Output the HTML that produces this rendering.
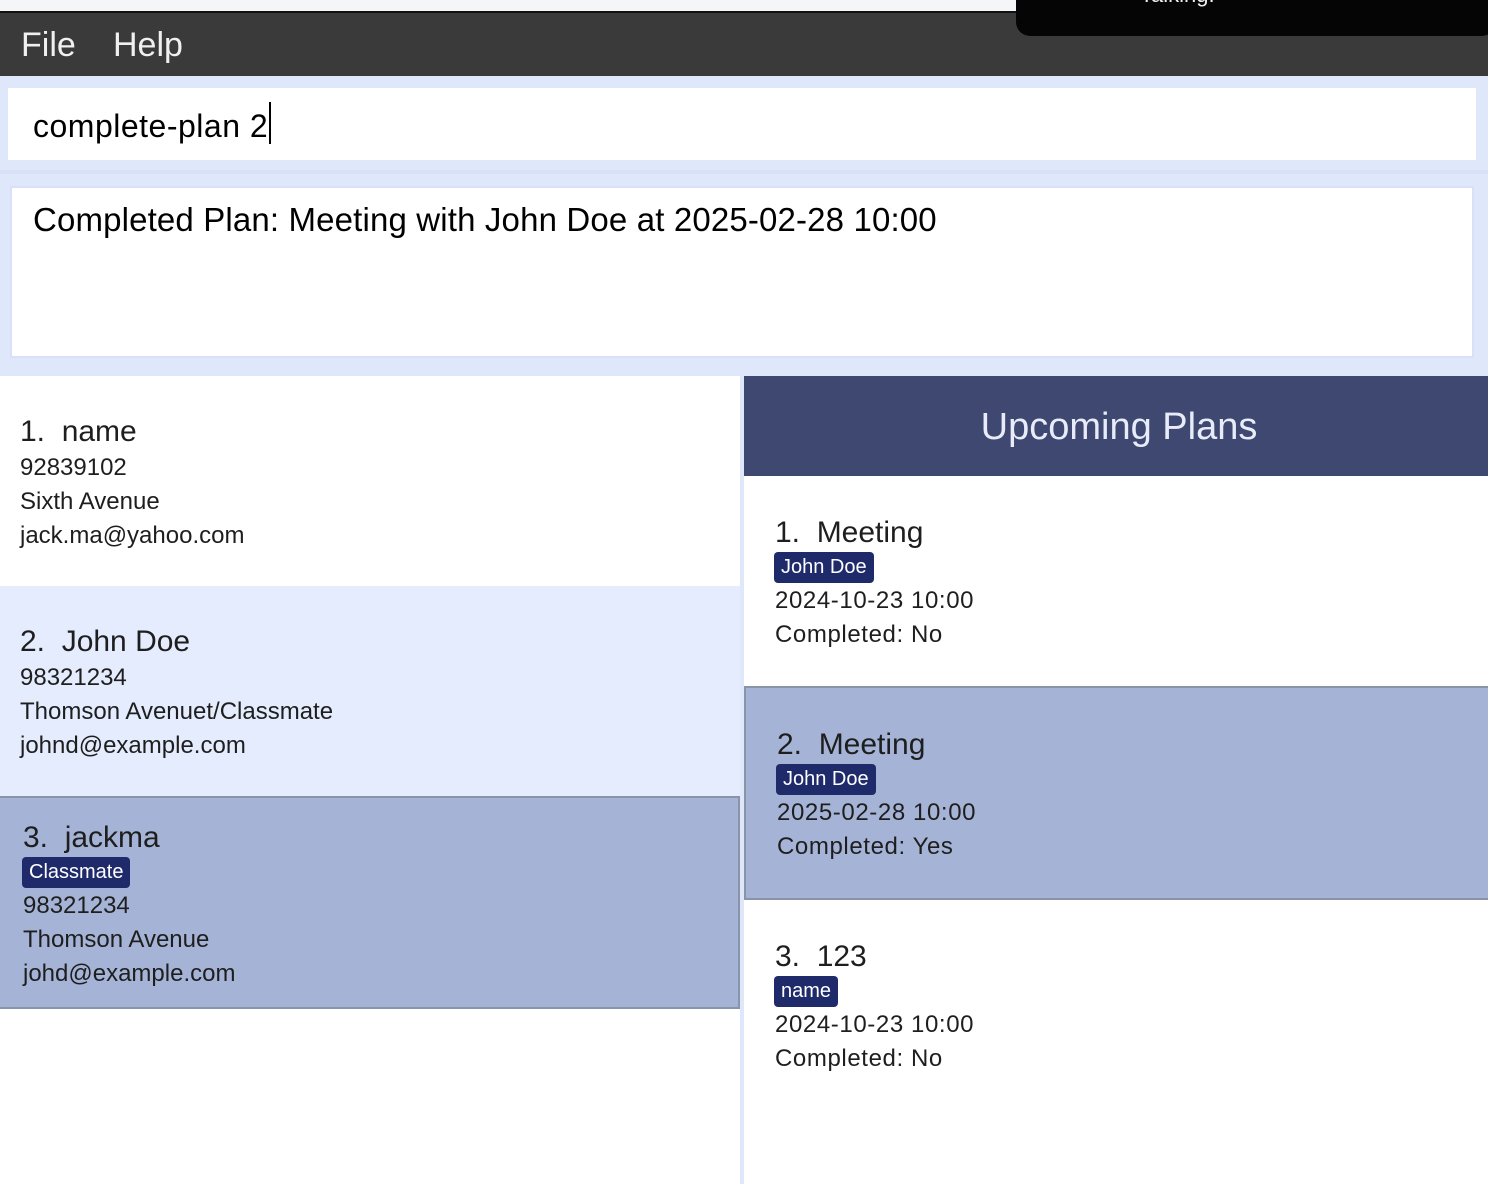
<!DOCTYPE html>
<html><head><meta charset="utf-8"><style>
*{margin:0;padding:0;box-sizing:border-box}
body{width:1488px;height:1184px;position:relative;overflow:hidden;background:#dfe8fa;font-family:"Liberation Sans",sans-serif;color:#1e1e1e}
.a{position:absolute;white-space:nowrap;line-height:1}
.box{position:absolute}
.n{font-size:30px}
.d{font-size:24px}
.r .d{letter-spacing:0.6px}
.tag{position:absolute;background:#1f2a6b;color:#fff;border-radius:4px;font-size:20px;line-height:31px;padding:0 7px;white-space:nowrap}
</style></head><body>
<div class="box" style="left:0;top:0;width:1488px;height:12px;background:#f5f6f8"></div>
<div class="box" style="left:0;top:11px;width:1488px;height:2px;background:#111"></div>
<div class="box" style="left:0;top:13px;width:1488px;height:63px;background:#3a3a3a"></div>
<div class="a" style="left:21px;top:28px;font-size:34px;color:#f0f0f0">File</div>
<div class="a" style="left:113px;top:28px;font-size:34px;color:#f0f0f0">Help</div>
<div class="box" style="left:1016px;top:-10px;width:480px;height:46px;background:#050505;border-radius:0 0 14px 14px"></div>
<div class="a" style="left:1140px;top:-16px;font-size:22px;color:#eee">Talking.</div>

<div class="box" style="left:8px;top:88px;width:1468px;height:72px;background:#fff"></div>
<div class="a" style="left:33px;top:110px;font-size:32px;color:#000;letter-spacing:0.5px">complete-plan 2</div>
<div class="box" style="left:269px;top:102px;width:2px;height:42px;background:#000"></div>
<div class="box" style="left:0;top:170px;width:1488px;height:4px;background:#d7e2f8"></div>
<div class="box" style="left:10px;top:186px;width:1464px;height:172px;background:#fff;border:2px solid #d7e2f8"></div>
<div class="a" style="left:33px;top:203px;font-size:33px;color:#000;letter-spacing:0.15px">Completed Plan: Meeting with John Doe at 2025-02-28 10:00</div>

<!-- left list -->
<div class="box" style="left:0;top:376px;width:740px;height:808px;background:#fff"></div>
<div class="box" style="left:0;top:586px;width:740px;height:210px;background:#e4ecfd"></div>
<div class="box" style="left:0;top:796px;width:740px;height:213px;background:#a5b4d6;border:2px solid #8a94a8;border-left:none"></div>
<div class="box" style="left:740px;top:376px;width:4px;height:808px;background:#dfe8fa"></div>

<div class="a n" style="left:20px;top:417px">1.&nbsp; name</div>
<div class="a d" style="left:20px;top:456px">92839102</div>
<div class="a d" style="left:20px;top:490px">Sixth Avenue</div>
<div class="a d" style="left:20px;top:524px">jack.ma@yahoo.com</div>

<div class="a n" style="left:20px;top:627px">2.&nbsp; John Doe</div>
<div class="a d" style="left:20px;top:666px">98321234</div>
<div class="a d" style="left:20px;top:700px">Thomson Avenuet/Classmate</div>
<div class="a d" style="left:20px;top:734px">johnd@example.com</div>

<div class="a n" style="left:23px;top:823px">3.&nbsp; jackma</div>
<div class="tag" style="left:22px;top:857px">Classmate</div>
<div class="a d" style="left:23px;top:894px">98321234</div>
<div class="a d" style="left:23px;top:928px">Thomson Avenue</div>
<div class="a d" style="left:23px;top:962px">johd@example.com</div>

<!-- right panel -->
<div class="r">
<div class="box" style="left:744px;top:376px;width:744px;height:808px;background:#fff"></div>
<div class="box" style="left:744px;top:376px;width:744px;height:100px;background:#3e4870"></div>
<div class="a" style="left:744px;width:750px;text-align:center;top:408px;font-size:38px;color:#e8ecf8">Upcoming Plans</div>
<div class="box" style="left:744px;top:686px;width:744px;height:214px;background:#a5b4d6;border:2px solid #8a94a8;border-right:none"></div>

<div class="a n" style="left:775px;top:518px">1.&nbsp; Meeting</div>
<div class="tag" style="left:774px;top:552px">John Doe</div>
<div class="a d" style="left:775px;top:589px">2024-10-23 10:00</div>
<div class="a d" style="left:775px;top:623px">Completed: No</div>

<div class="a n" style="left:777px;top:730px">2.&nbsp; Meeting</div>
<div class="tag" style="left:776px;top:764px">John Doe</div>
<div class="a d" style="left:777px;top:801px">2025-02-28 10:00</div>
<div class="a d" style="left:777px;top:835px">Completed: Yes</div>

<div class="a n" style="left:775px;top:942px">3.&nbsp; 123</div>
<div class="tag" style="left:774px;top:976px">name</div>
<div class="a d" style="left:775px;top:1013px">2024-10-23 10:00</div>
<div class="a d" style="left:775px;top:1047px">Completed: No</div>
</div>
</body></html>
